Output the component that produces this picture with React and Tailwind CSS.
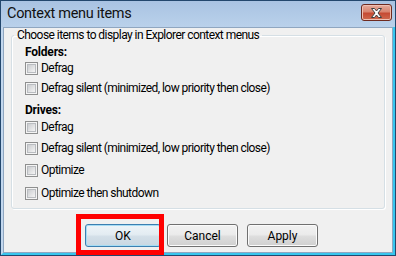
import React from "react";

function Box() {
  return (
    <span className="w-[13px] h-[13px] shrink-0 flex border border-[#8e8f8f] bg-[#f4f4f4] p-[1px]">
      <span className="flex-1 border border-[#b9bcc0] bg-[linear-gradient(135deg,#cbcdd0,#f4f4f4)]" />
    </span>
  );
}

function Row({ label, cls }) {
  return (
    <div className={cls}>
      <Box />
      <span className="ml-[3px] text-[12px] leading-[13px] tracking-[-0.55px] text-black whitespace-nowrap">{label}</span>
    </div>
  );
}

function Btn({ children, cls, def }) {
  return (
    <div
      className={
        def
          ? "w-[76px] h-[23px] rounded-[3px] border border-[#3c7fb1] bg-[linear-gradient(#eef4f8_0%,#e3ecf2_45%,#d3dfe8_55%,#c9d7e2_100%)] shadow-[inset_0_0_0_1px_#a6dcf4] flex items-center justify-center text-[12px] text-black"
          : cls
      }
    >
      {children}
    </div>
  );
}

export default function App() {
  const btn =
    "h-[23px] rounded-[3px] border border-[#707070] bg-[linear-gradient(#f2f2f2_0%,#ebebeb_45%,#dddddd_55%,#cfcfcf_100%)] shadow-[inset_0_0_0_1px_#fbfbfb] flex items-center justify-center text-[12px] text-black";
  return (
    <div className="w-[396px] h-[256px] flex flex-col border border-[#23476d] bg-[linear-gradient(#a9c3e2,#bcd3ec_30px)] font-['Roboto',sans-serif]">
      <div className="h-[26px] shrink-0 flex items-start justify-between pl-[6px] pr-[3px]">
        <span className="mt-[4px] text-[14.5px] leading-[18px] tracking-[-0.3px] text-[#111]">
          Context menu items
        </span>
        <div className="mt-[3px] w-[31px] h-[17px] rounded-[3px] border border-[#6e2a1f] bg-[linear-gradient(#e6ab9c_0%,#d8846f_45%,#c54a33_55%,#cf6a4f_100%)] shadow-[inset_0_0_0_1px_#efc0b3] flex items-center justify-center">
          <svg width="13" height="10" viewBox="0 0 13 10">
            <path
              d="M1.5 0.5H4.5L6.5 3L8.5 0.5H11.5L8 5L11.5 9.5H8.5L6.5 7L4.5 9.5H1.5L5 5Z"
              fill="#ffffff"
              stroke="#3f3f3f"
              strokeWidth="1"
              strokeLinejoin="round"
            />
          </svg>
        </div>
      </div>
      <div className="flex-1 flex border-l-2 border-l-[#c2d7ee] border-r-2 border-r-[#38c6ee] border-b-2 border-b-[#38c6ee]">
        <div className="flex-1 flex flex-col border border-[#8fa6c0] bg-[#f0f0f0]">
          <fieldset className="mx-[7px] border border-[#d5dfe5] rounded-[3px] pl-[2px] pb-[8px] shadow-[inset_1px_1px_0_#ffffff,1px_1px_0_#ffffff]">
            <legend className="px-[3px] text-[12px] leading-[15px] tracking-[-0.55px] text-black">
              Choose items to display in Explorer context menus
            </legend>
            <div className="pl-[11px] flex flex-col">
              <div className="mt-[2px] text-[12px] leading-[15px] font-bold tracking-[-0.2px] text-black">Folders:</div>
              <Row cls="mt-[2px] flex items-center h-[13px]" label="Defrag" />
              <Row cls="mt-[7px] flex items-center h-[13px]" label="Defrag silent (minimized, low priority then close)" />
              <div className="mt-[8px] text-[12px] leading-[15px] font-bold tracking-[-0.2px] text-black">Drives:</div>
              <Row cls="mt-[3px] flex items-center h-[13px]" label="Defrag" />
              <Row cls="mt-[8px] flex items-center h-[13px]" label="Defrag silent (minimized, low priority then close)" />
              <Row cls="mt-[9px] flex items-center h-[13px]" label="Optimize" />
              <Row cls="mt-[10px] flex items-center h-[13px]" label="Optimize then shutdown" />
            </div>
          </fieldset>
          <div className="mt-[15px] flex pl-[81px]">
            <div className="relative">
              <Btn def>OK</Btn>
              <div className="absolute left-[-9px] top-[-10px] w-[88px] h-[41px] border-[5px] border-[#ff0000]" />
            </div>
            <div className="ml-[6px] w-[71px]">
              <Btn cls={btn}>Cancel</Btn>
            </div>
            <div className="ml-[9px] w-[71px]">
              <Btn cls={btn}>Apply</Btn>
            </div>
          </div>
        </div>
      </div>
    </div>
  );
}
